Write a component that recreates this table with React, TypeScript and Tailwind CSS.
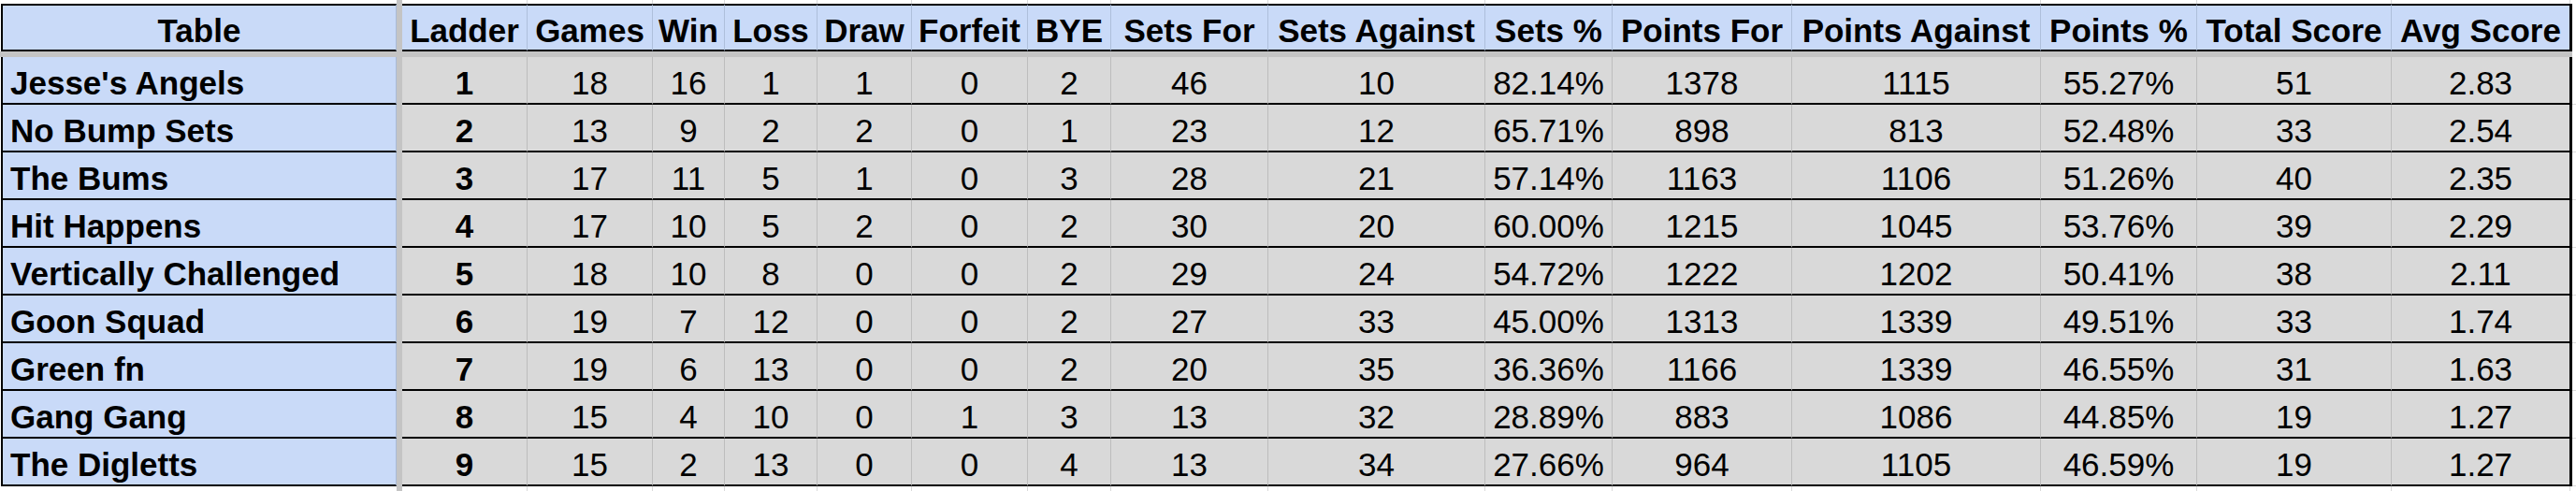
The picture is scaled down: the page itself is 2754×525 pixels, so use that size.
import React from 'react';

type Col = { label: string; w: string };

const cols: Col[] = [
  { label: 'Ladder', w: 'w-[133px]' },
  { label: 'Games', w: 'w-[134px]' },
  { label: 'Win', w: 'w-[77px]' },
  { label: 'Loss', w: 'w-[99px]' },
  { label: 'Draw', w: 'w-[101px]' },
  { label: 'Forfeit', w: 'w-[124px]' },
  { label: 'BYE', w: 'w-[89px]' },
  { label: 'Sets For', w: 'w-[168px]' },
  { label: 'Sets Against', w: 'w-[232px]' },
  { label: 'Sets %', w: 'w-[136px]' },
  { label: 'Points For', w: 'w-[192px]' },
  { label: 'Points Against', w: 'w-[266px]' },
  { label: 'Points %', w: 'w-[167px]' },
  { label: 'Total Score', w: 'w-[208px]' },
  { label: 'Avg Score', w: 'w-[191px]' },
];

// team, then values in column order
const rows: [string, ...string[]][] = [
  ["Jesse's Angels", '1', '18', '16', '1', '1', '0', '2', '46', '10', '82.14%', '1378', '1115', '55.27%', '51', '2.83'],
  ['No Bump Sets', '2', '13', '9', '2', '2', '0', '1', '23', '12', '65.71%', '898', '813', '52.48%', '33', '2.54'],
  ['The Bums', '3', '17', '11', '5', '1', '0', '3', '28', '21', '57.14%', '1163', '1106', '51.26%', '40', '2.35'],
  ['Hit Happens', '4', '17', '10', '5', '2', '0', '2', '30', '20', '60.00%', '1215', '1045', '53.76%', '39', '2.29'],
  ['Vertically Challenged', '5', '18', '10', '8', '0', '0', '2', '29', '24', '54.72%', '1222', '1202', '50.41%', '38', '2.11'],
  ['Goon Squad', '6', '19', '7', '12', '0', '0', '2', '27', '33', '45.00%', '1313', '1339', '49.51%', '33', '1.74'],
  ['Green fn', '7', '19', '6', '13', '0', '0', '2', '20', '35', '36.36%', '1166', '1339', '46.55%', '31', '1.63'],
  ['Gang Gang', '8', '15', '4', '10', '0', '1', '3', '13', '32', '28.89%', '883', '1086', '44.85%', '19', '1.27'],
  ['The Digletts', '9', '15', '2', '13', '0', '0', '4', '13', '34', '27.66%', '964', '1105', '46.59%', '19', '1.27'],
];

function Freeze() {
  return <div className="w-[6px] shrink-0 self-stretch bg-[#c4c4c4]" />;
}

// empty sheet area above / below the table, faint gridlines only
function Strip({ h }: { h: string }) {
  return (
    <div className={`flex ${h} bg-white`}>
      <div className="w-[424px] shrink-0" />
      <Freeze />
      {cols.map((c, i) => (
        <div key={c.label} className={`${c.w} shrink-0 ${i === 0 ? '' : 'border-l border-l-[#dadada]'}`} />
      ))}
      <div className="w-[3px] shrink-0 border-l border-l-[#dadada]" />
      <div className="flex-1" />
    </div>
  );
}

export default function App() {
  return (
    <div
      className="w-[2754px] h-[525px] bg-white text-black text-[35px] leading-none overflow-hidden"
      style={{ fontFamily: '"Liberation Sans", Arial, sans-serif' }}
    >
      <Strip h="h-[4px]" />

      {/* header */}
      <div className="flex h-[51px]">
        <div className="w-px shrink-0" />
        <div className="w-[423px] shrink-0 flex items-end justify-center pb-[3px] bg-[#c9daf8] border-2 border-r border-black border-r-[#a9bbd8] font-bold">
          Table
        </div>
        <Freeze />
        {cols.map((c, i) => (
          <div
            key={c.label}
            className={`${c.w} shrink-0 flex items-end justify-center pb-[3px] bg-[#c9daf8] border-y-2 border-black font-bold whitespace-nowrap ${i === 0 ? '' : 'border-l border-l-[#aebfdb]'}`}
          >
            {c.label}
          </div>
        ))}
        <div className="w-[3px] shrink-0 bg-black" />
        <div className="flex-1 bg-white" />
      </div>

      {/* frozen row divider */}
      <div className="flex h-[6px]">
        <div className="w-[2750px] bg-[#c4c4c4]" />
        <div className="flex-1 bg-white" />
      </div>

      {rows.map(([team, ...vals]) => (
        <div key={team} className="flex h-[51px]">
          <div className="w-px shrink-0" />
          <div className="w-[423px] shrink-0 flex items-end pl-[8px] pb-[4px] bg-[#c9daf8] border-l-2 border-b-2 border-black border-r border-r-[#a9bbd8] font-bold whitespace-nowrap">
            {team}
          </div>
          <Freeze />
          {vals.map((v, i) => (
            <div
              key={i}
              className={`${cols[i].w} shrink-0 flex items-end justify-center pb-[4px] bg-[#d9d9d9] border-b-2 border-black ${i === 0 ? 'font-bold' : 'border-l border-l-[#bdbdbd]'}`}
            >
              {v}
            </div>
          ))}
          <div className="w-[3px] shrink-0 bg-black" />
          <div className="flex-1 border-b border-b-[#dadada] bg-white" />
        </div>
      ))}

      <Strip h="h-[8px]" />
    </div>
  );
}
